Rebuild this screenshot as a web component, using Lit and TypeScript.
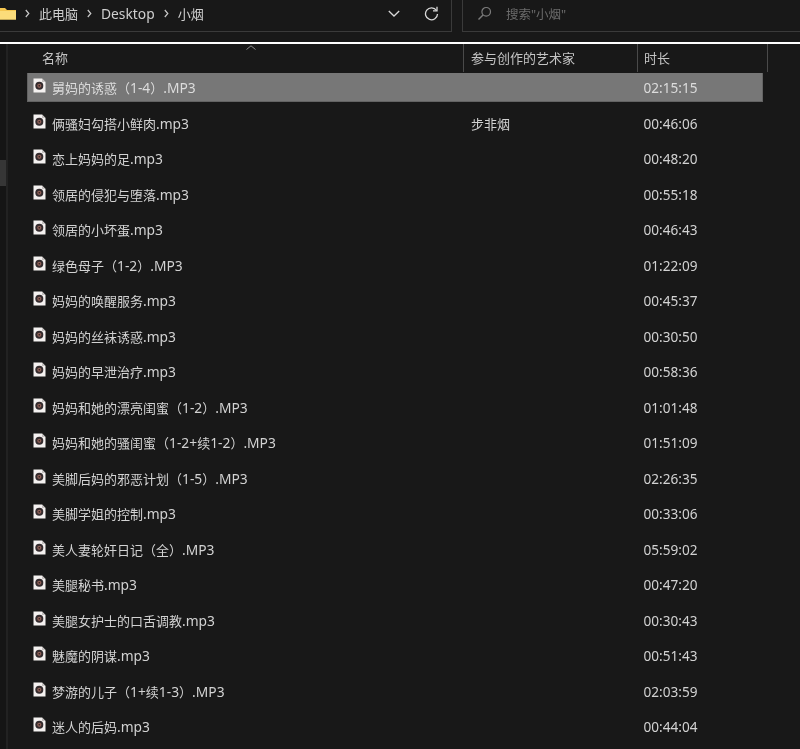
import { LitElement, html, css, svg } from "lit";
import { customElement } from "lit/decorators.js";

const rows: [string, string, string][] = [
  ["舅妈的诱惑（1-4）.MP3", "", "02:15:15"],
  ["俩骚妇勾搭小鲜肉.mp3", "步非烟", "00:46:06"],
  ["恋上妈妈的足.mp3", "", "00:48:20"],
  ["领居的侵犯与堕落.mp3", "", "00:55:18"],
  ["领居的小坏蛋.mp3", "", "00:46:43"],
  ["绿色母子（1-2）.MP3", "", "01:22:09"],
  ["妈妈的唤醒服务.mp3", "", "00:45:37"],
  ["妈妈的丝袜诱惑.mp3", "", "00:30:50"],
  ["妈妈的早泄治疗.mp3", "", "00:58:36"],
  ["妈妈和她的漂亮闺蜜（1-2）.MP3", "", "01:01:48"],
  ["妈妈和她的骚闺蜜（1-2+续1-2）.MP3", "", "01:51:09"],
  ["美脚后妈的邪恶计划（1-5）.MP3", "", "02:26:35"],
  ["美脚学姐的控制.mp3", "", "00:33:06"],
  ["美人妻轮奸日记（全）.MP3", "", "05:59:02"],
  ["美腿秘书.mp3", "", "00:47:20"],
  ["美腿女护士的口舌调教.mp3", "", "00:30:43"],
  ["魅魔的阴谋.mp3", "", "00:51:43"],
  ["梦游的儿子（1+续1-3）.MP3", "", "02:03:59"],
  ["迷人的后妈.mp3", "", "00:44:04"],
];

const fileIcon = svg`<svg class="file" width="13" height="15" viewBox="0 0 13 15">
  <path d="M.5 .5h8.500L12.500 4v10.500H.5z" fill="#f4f1f0"/>
  <path d="M9 .5V4h3.500z" fill="#c4c0bf"/>
  <circle cx="6.300" cy="7.800" r="4" fill="#352c2e"/>
  <circle cx="6.300" cy="7.800" r="2.100" fill="#8d5f56"/>
  <circle cx="6.300" cy="7.800" r=".8" fill="#2a1f1f"/>
</svg>`;

const splitName = (name: string) =>
  name.split(/([\x20-\x7e]+)/).map((part, i) =>
    i % 2 ? html`<span class="lat">${part}</span>` : part
  );

@customElement("app-root")
export class AppRoot extends LitElement {
  static styles = css`
    :host {
      display: block;
      width: 800px;
      height: 749px;
      overflow: hidden;
      background: #181818;
      color: #d6d6d6;
      font-family: "Noto Sans", "Noto Sans CJK SC", sans-serif;
      font-size: 13px;
    }
    .top {
      height: 41.500px;
      display: flex;
      gap: 10px;
    }
    .address {
      width: 452px;
      height: 32px;
      flex: none;
      box-sizing: border-box;
      border-right: 1px solid #3a3a3a;
      border-bottom: 1px solid #3a3a3a;
      display: flex;
      align-items: center;
      justify-content: space-between;
      padding: 0 12px 5px 0;
    }
    .crumbs {
      display: flex;
      align-items: center;
      font-size: 13px;
      color: #cfcfcf;
      filter: blur(0.25px);
    }
    .latin { font-size: 13.800px; }
    .folder { margin-left: -1px; margin-right: 8px; }
    .sep { margin: 0 9px 0 0; display: block; }
    .sep.mid { margin-left: 9px; }
    .actions { display: flex; align-items: center; gap: 24px; }
    .search {
      flex: 1;
      height: 32px;
      box-sizing: border-box;
      border-left: 1px solid #3a3a3a;
      border-bottom: 1px solid #3a3a3a;
      display: flex;
      align-items: center;
      gap: 14px;
      padding: 0 0 5px 14px;
      color: #6b6b6b;
      font-size: 12.500px;
      filter: blur(0.25px);
    }
    .rule { height: 2.500px; background: #fff; }
    .pane { display: flex; }
    .rail {
      width: 8px;
      flex: none;
      height: 705px;
      background: #151515;
      border-right: 2px solid #222;
      box-sizing: border-box;
      padding-top: 116px;
    }
    .thumb { width: 6px; height: 26px; background: #363636; }
    .content { flex: 1; min-width: 0; position: relative; }
    .caret { position: absolute; left: 238px; top: 1px; display: block; }
    .head {
      display: grid;
      grid-template-columns: 456px 174px 130px;
      height: 28px;
      box-sizing: border-box;
      color: #c4c4c4;
      font-size: 13px;
      filter: blur(0.2px);
    }
    .hcell {
      display: flex;
      align-items: center;
      padding: 0 0 2px 7px;
      box-sizing: border-box;
      border-right: 1px solid #4a4a4a;
    }
    .hcell:first-child { padding-left: 34px; }
    .hcell:last-child { padding-left: 6px; }
    .list { display: flex; flex-direction: column; gap: 6px; padding-top: .5px; }
    .row {
      margin-left: 19px;
      width: 736px;
      height: 29.500px;
      box-sizing: border-box;
      display: grid;
      grid-template-columns: 437px 173px 1fr;
      align-items: center;
      color: #d2d2d2;
      font-size: 13px;
      line-height: 18px;
      filter: blur(0.25px);
    }
    .row.selected {
      background: #777;
      box-shadow: inset 0 -1px #636363, inset 1px 0 #636363, inset -1px 0 #636363;
      color: #dcdcdc;
    }
    .name { display: flex; align-items: center; gap: 6px; padding-left: 6px; white-space: nowrap; }
    .label { padding-top: 1.500px; }
    .lat { font-size: 13.800px; }
    .file { flex: none; margin-top: -3px; }
    .artist { padding: 1.500px 0 0 7px; }
    .time { padding: 1.500px 0 0 6.500px; font-size: 13.600px; }
  `;

  render() {
    return html`
      <div class="top">
        <div class="address">
          <div class="crumbs">
            <svg class="folder" width="18" height="13" viewBox="0 0 18 13">
              <path d="M0 1h6l2 2h9v9.500H0z" fill="#f5c751"/>
              <path d="M0 4h17v8.500H0z" fill="#fbdc7a"/>
            </svg>
            ${this.chev(false)}<span>此电脑</span>${this.chev(true)}<span class="latin">Desktop</span>${this.chev(true)}<span>小烟</span>
          </div>
          <div class="actions">
            <svg width="12" height="7" viewBox="0 0 12 7"><path d="M.8 1l5.200 5 5.200-5" fill="none" stroke="#d8d8d8" stroke-width="1.300"/></svg>
            <svg width="15" height="15" viewBox="0 0 15 15">
              <path d="M12.500 4.500A6 6 0 1 0 13.500 8" fill="none" stroke="#d8d8d8" stroke-width="1.300"/>
              <path d="M13 .8v4h-4" fill="none" stroke="#d8d8d8" stroke-width="1.300"/>
            </svg>
          </div>
        </div>
        <div class="search">
          <svg width="15" height="15" viewBox="0 0 15 15">
            <circle cx="9.200" cy="5.800" r="4.300" fill="none" stroke="#7c7c7c" stroke-width="1.200"/>
            <path d="M6 9L1.500 13.500" stroke="#7c7c7c" stroke-width="1.400"/>
          </svg>
          <span>搜索"小烟"</span>
        </div>
      </div>
      <div class="rule"></div>
      <div class="pane">
        <div class="rail"><div class="thumb"></div></div>
        <div class="content">
          <svg class="caret" width="10" height="5" viewBox="0 0 10 5"><path d="M.5 4.500L5 .8l4.500 3.700" fill="none" stroke="#8a8a8a"/></svg>
          <div class="head">
            <div class="hcell">名称</div>
            <div class="hcell">参与创作的艺术家</div>
            <div class="hcell">时长</div>
          </div>
          <div class="list">
            ${rows.map(
              ([n, a, t], i) => html`<div class="row ${i === 0 ? "selected" : ""}">
                <div class="name">${fileIcon}<span class="label">${splitName(n)}</span></div>
                <div class="artist">${a}</div>
                <div class="time">${t}</div>
              </div>`
            )}
          </div>
        </div>
      </div>
    `;
  }

  private chev(mid: boolean) {
    return html`<svg class="sep ${mid ? "mid" : ""}" width="5" height="9" viewBox="0 0 5 9"><path d="M.8 1l3 3.500-3 3.500" fill="none" stroke="#c8c8c8" stroke-width="1.200"/></svg>`;
  }
}
